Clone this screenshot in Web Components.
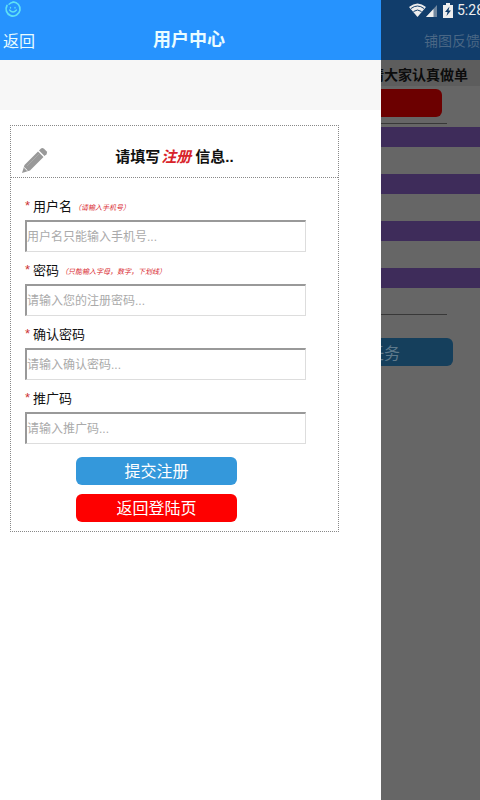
<!DOCTYPE html>
<html lang="zh-CN">
<head>
  <meta charset="UTF-8">
  <meta name="viewport" content="width=device-width, initial-scale=1">
  <title>用户中心</title>
  <style>
    body {
      margin: 0;
      background: #666;
      font-family: "Liberation Sans", "Noto Sans CJK SC", sans-serif;
    }
  </style>
</head>
<body>
  <app-shell>
    <user-drawer slot="drawer">
      <register-card>
        <form-field name="username" label="用户名" hint="（请输入手机号）" placeholder="用户名只能输入手机号..."></form-field>
        <form-field name="password" type="password" label="密码" hint="（只能输入字母，数字，下划线）" placeholder="请输入您的注册密码..."></form-field>
        <form-field name="confirm" type="password" label="确认密码" placeholder="请输入确认密码..."></form-field>
        <form-field name="code" label="推广码" placeholder="请输入推广码..."></form-field>
        <action-button slot="actions">提交注册</action-button>
        <action-button slot="actions" kind="danger">返回登陆页</action-button>
      </register-card>
    </user-drawer>
    <task-page slot="page"></task-page>
  </app-shell>

  <script>
    class AppShell extends HTMLElement {
      constructor() {
        super();
        this.attachShadow({ mode: "open" });
        this.shadowRoot.innerHTML = `
          <style>
            :host {
              display: grid;
              grid-template-columns: minmax(0, 1fr) 99px;
              min-height: 100vh;
            }
          </style>
          <slot name="drawer"></slot>
          <slot name="page"></slot>
        `;
      }
    }

    class UserDrawer extends HTMLElement {
      constructor() {
        super();
        this.attachShadow({ mode: "open" });
        this.shadowRoot.innerHTML = `
          <style>
            :host {
              display: block;
              background: #fff;
            }
            header {
              height: 60px;
              box-sizing: border-box;
              display: flex;
              flex-direction: column;
              background: #2693fe;
              color: #e9fcff;
            }
            .status {
              height: 20px;
              padding-left: 4px;
            }
            .status svg {
              display: block;
            }
            nav {
              flex: 1;
              display: grid;
              grid-template-columns: 1fr auto 1fr;
              align-items: center;
              padding: 0 6px 0 3px;
            }
            a {
              color: inherit;
              font-size: 16px;
              text-decoration: none;
            }
            h1 {
              margin: 0;
              font-size: 18px;
              line-height: 24px;
            }
            .band {
              height: 50px;
              background: #f7f7f7;
            }
            main {
              padding: 15px 42px 15px 10px;
            }
          </style>
          <header>
            <div class="status">
              <svg width="18" height="18" viewBox="0 0 18 18" fill="none" stroke="#5fe0f5" stroke-linecap="round">
                <path d="M3 5.500A7 7 0 1 0 9 2" stroke-width="1.700"/>
                <path d="M5 4.200A7 7 0 0 1 12 2.700" stroke-width="1.300"/>
                <path d="M5.500 10Q9 14 12.500 10M6.500 7.500v.5M11 7.500v.5" stroke-width="1.300"/>
              </svg>
            </div>
            <nav>
              <a href="#">返回</a>
              <h1>用户中心</h1>
            </nav>
          </header>
          <div class="band"></div>
          <main><slot></slot></main>
        `;
      }
    }

    class RegisterCard extends HTMLElement {
      constructor() {
        super();
        this.attachShadow({ mode: "open" });
        this.shadowRoot.innerHTML = `
          <style>
            :host {
              display: block;
              border: 1px dotted #888;
            }
            .title {
              display: grid;
              grid-template-columns: 27px 1fr 27px;
              align-items: center;
              height: 51px;
              padding: 0 10px;
              border-bottom: 1px dotted #888;
            }
            .title svg {
              align-self: end;
              margin-bottom: 3px;
            }
            h2 {
              margin: 0;
              padding-top: 10px;
              font-size: 15px;
              line-height: 20px;
              text-align: center;
              color: #111;
            }
            em {
              color: #d8232a;
              margin: 0 4px 0 1px;
            }
            .fields {
              padding: 14px 32px 0 14px;
            }
            .actions {
              display: flex;
              flex-direction: column;
              align-items: center;
              gap: 9px;
              padding: 9px 36px 9px 0;
            }
          </style>
          <div class="title">
            <svg width="27" height="27" viewBox="0 0 27 27" fill="#999">
              <path d="M1 26l2.500-8L17 4.500l5.500 5.500L9 23.500z"/>
              <path d="M18 3.500l2-2q1.500-1 3 .3l2.500 2.500q1.200 1.500 0 3L23.500 9z"/>
              <path d="M6 19L18 7" stroke="#aaa" stroke-width="1"/>
              <path d="M3.200 20.500l3.300 3.300" stroke="#fff" stroke-width="1"/>
            </svg>
            <h2>请填写<em>注册</em>信息..</h2>
          </div>
          <div class="fields"><slot></slot></div>
          <div class="actions"><slot name="actions"></slot></div>
        `;
      }
    }

    class FormField extends HTMLElement {
      constructor() {
        super();
        this.attachShadow({ mode: "open" });
      }

      connectedCallback() {
        this.render();
      }

      render() {
        const name = this.getAttribute("name");
        const type = this.getAttribute("type") || "text";
        const hint = this.getAttribute("hint") || "";

        this.shadowRoot.innerHTML = `
          <style>
            :host {
              display: block;
              height: 64px;
            }
            label {
              display: flex;
              align-items: center;
              height: 26px;
              margin-bottom: 2px;
              font-size: 13px;
              color: #111;
            }
            .star {
              width: 8px;
              color: #c33;
            }
            .hint {
              font-size: 7px;
              font-style: italic;
              color: #d8232a;
              padding: 4px 0 0 2px;
            }
            input {
              display: block;
              width: 100%;
              height: 32px;
              box-sizing: border-box;
              padding: 0;
              border: 2px solid #999;
              border-right: 1px solid #ddd;
              border-bottom: 1px solid #ddd;
              background: #fff;
              font-family: inherit;
              font-size: 12px;
            }
            input::placeholder {
              color: #aaa;
            }
          </style>
          <label for="${name}">
            <span class="star">*</span>${this.getAttribute("label")}<span class="hint">${hint}</span>
          </label>
          <input id="${name}" name="${name}" type="${type}" placeholder="${this.getAttribute("placeholder")}">
        `;
      }
    }

    class ActionButton extends HTMLElement {
      constructor() {
        super();
        this.attachShadow({ mode: "open" });
        this.shadowRoot.innerHTML = `
          <style>
            :host {
              display: block;
              width: 161px;
            }
            button {
              display: block;
              width: 100%;
              height: 28px;
              padding: 0 0 2px;
              border: 0;
              border-radius: 6px;
              background: #3498db;
              color: #fff;
              font-family: inherit;
              font-size: 16px;
            }
            :host([kind="danger"]) button {
              background: #fe0000;
            }
          </style>
          <button type="button"><slot></slot></button>
        `;
      }
    }

    class TaskPage extends HTMLElement {
      constructor() {
        super();
        this.attachShadow({ mode: "open" });
        this.shadowRoot.innerHTML = `
          <style>
            :host {
              display: block;
              overflow: hidden;
              background: #666;
            }
            header {
              height: 60px;
              background: #113d6b;
            }
            .status {
              display: flex;
              align-items: center;
              gap: 4px;
              height: 20px;
              padding-left: 28px;
              color: #eee;
              font: 14px Roboto, sans-serif;
              white-space: nowrap;
            }
            .status svg {
              flex: none;
            }
            .feedback {
              display: flex;
              align-items: center;
              justify-content: flex-end;
              height: 40px;
              color: #4a6785;
              font-size: 14px;
              text-decoration: none;
              white-space: nowrap;
            }
            .notice {
              display: flex;
              justify-content: flex-end;
              margin: 0;
              padding: 4px 12px 0 0;
              background: #5d5d5d;
              color: #0c0c0c;
              font-size: 14px;
              font-weight: bold;
              line-height: 22px;
              white-space: nowrap;
            }
            .red {
              display: block;
              width: 61px;
              height: 28px;
              margin: 3px 0 6px;
              border: 0;
              border-radius: 0 6px 6px 0;
              background: #6c0000;
            }
            hr {
              width: 66px;
              margin: 0;
              border: 0;
              border-top: 1px solid #383838;
            }
            .rows {
              display: grid;
              grid-auto-rows: 20px;
              gap: 27px;
              margin: 3px 0 26px;
            }
            .rows div {
              background: #3e2c5a;
            }
            .task {
              display: flex;
              align-items: center;
              justify-content: flex-end;
              width: 72px;
              height: 28px;
              margin-top: 23px;
              padding: 0 53px 0 0;
              border: 0;
              border-radius: 0 6px 6px 0;
              background: #153f5c;
              color: #5f7a8c;
              font-family: inherit;
              font-size: 16px;
              white-space: nowrap;
            }
          </style>
          <header>
            <div class="status">
              <svg width="30" height="16" viewBox="0 0 30 16" fill="#eee">
                <path d="M0 5Q8.500-2 17 5L8.500 15z"/>
                <path d="M2 6.500Q8.500 1.500 15 6.500M4.500 9.500Q8.500 6.500 12.500 9.500" fill="none" stroke="#113d6b" stroke-width="1"/>
                <path d="M17 15L28 3v12z" fill="#71879f"/>
                <path d="M17 15L24.500 7v8z"/>
              </svg>
              <svg width="10" height="15" viewBox="0 0 10 15">
                <path d="M3 0h4v2h3v13H0V2h3z" fill="#eee"/>
                <path d="M6.500 3.500L2 9h2.500L3.500 13 8 7.500H5.500z" fill="#113d6b"/>
              </svg>
              <span>5:28</span>
            </div>
            <a class="feedback" href="#">铺图反馈</a>
          </header>
          <p class="notice">请大家认真做单</p>
          <button class="red" type="button" aria-label="公告"></button>
          <hr>
          <div class="rows"><div></div><div></div><div></div><div></div></div>
          <hr>
          <button class="task" type="button">任务</button>
        `;
      }
    }

    customElements.define("app-shell", AppShell);
    customElements.define("user-drawer", UserDrawer);
    customElements.define("register-card", RegisterCard);
    customElements.define("form-field", FormField);
    customElements.define("action-button", ActionButton);
    customElements.define("task-page", TaskPage);
  </script>
</body>
</html>
